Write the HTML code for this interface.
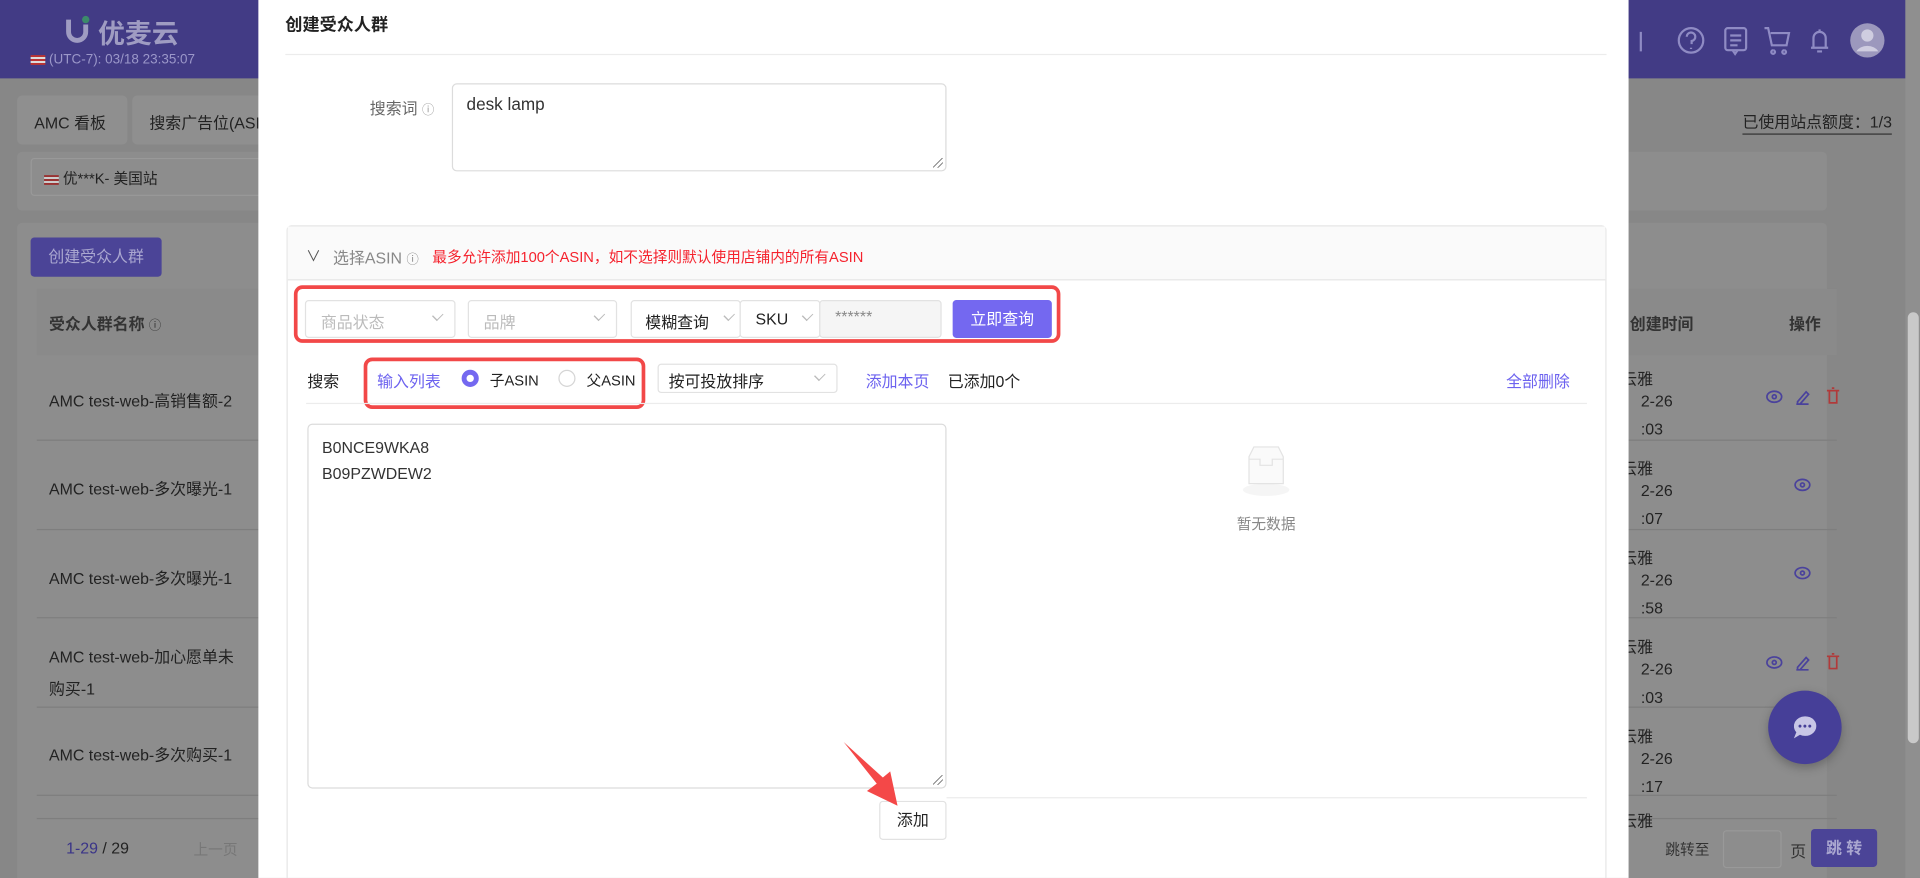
<!DOCTYPE html>
<html><head><meta charset="utf-8"><style>
*{box-sizing:border-box;margin:0;padding:0}
html,body{width:1920px;height:878px;overflow:hidden;background:#878787}
#w{position:absolute;left:0;top:0;width:1568px;height:717px;transform:scale(1.22449);transform-origin:0 0;font-family:"Liberation Sans","Noto Sans CJK SC",sans-serif;font-size:13px;color:#222;background:#878787;overflow:hidden}
.a{position:absolute;white-space:nowrap}
.card{position:absolute;background:#8d8d8d;border-radius:4px}
.sel{position:absolute;border:1px solid #e2e2e2;border-radius:3px;background:#fff;color:#bbb;font-size:13px;padding:7px 12px;height:31px}
.chev{position:absolute;right:10px;top:8px;width:7px;height:7px;border-right:1px solid #bbb;border-bottom:1px solid #bbb;transform:rotate(45deg) scale(.8,1.1)}
.red{position:absolute;border:3px solid #f24848;border-radius:7px}
.pu{color:#6c62ef}
.rz{position:absolute;right:2px;bottom:2px;width:8px;height:8px;background:linear-gradient(135deg,transparent 45%,#888 45% 52%,transparent 52% 70%,#888 70% 77%,transparent 77%)}
.rc{position:absolute;white-space:nowrap;left:1340px;line-height:22.5px}
.rn{position:absolute;white-space:nowrap;left:1324px}
</style></head><body><div id="w">
<div class="a" style="left:0;top:0;width:1568px;height:64px;background:#423b85"></div>
<svg class="a" style="left:52px;top:12px" width="24" height="24"><path d="M4 4v10a7 7 0 0 0 14 0V8" fill="none" stroke="#9f9cc2" stroke-width="4"/><circle cx="18" cy="4" r="3" fill="#3c8a6a"/></svg>
<div class="a" style="left:80px;top:10px;font-size:22px;font-weight:bold;color:#9f9cc2">优麦云</div>
<div class="a" style="left:25px;top:43px;font-size:11px;color:#9b97c9"><span style="display:inline-block;width:12px;height:8px;background:linear-gradient(#b33 0 20%,#ddd 20% 40%,#b33 40% 60%,#ddd 60% 80%,#b33 80%);vertical-align:-1px"></span> (UTC-7): 03/18 23:35:07</div>
<svg class="a" style="left:1335px;top:18px" width="210" height="32" viewBox="0 0 210 32" fill="none" stroke="#8f8bc4" stroke-width="1.8">
<path d="M5 8v16" />
<circle cx="46" cy="15" r="10"/><path d="M42.5 12a3.5 3.5 0 1 1 4 3.5v2.5M46 21v1"/>
<rect x="74" y="5" width="17" height="18" rx="2"/><path d="M78 11h9M78 15h9M78 19h6M80 23l2 3 2-3"/>
<path d="M106 5h3l3 14h12l2-10h-15M113 23a1.5 1.5 0 1 0 .1 0M122 23a1.5 1.5 0 1 0 .1 0"/>
<path d="M144 21h14M146 21v-8a5 5 0 0 1 10 0v8M151 8V6M149 24h4"/>
<circle cx="190" cy="15" r="14" fill="#9c98bd" stroke="none"/><circle cx="190" cy="11" r="5" fill="#cfcde0" stroke="none"/><path d="M181 24a10 8 0 0 1 18 0" fill="#cfcde0" stroke="none"/>
</svg>
<div class="card" style="left:14px;top:78px;width:90px;height:40px;background:#8f8f8f"></div>
<div class="a" style="left:28px;top:90px">AMC 看板</div>
<div class="card" style="left:108px;top:78px;width:150px;height:40px;background:#8f8f8f"></div>
<div class="a" style="left:122px;top:90px">搜索广告位(ASIN)</div>
<div class="a" style="left:1423px;top:89px;border-bottom:1px solid #333;padding-bottom:1px">已使用站点额度：1/3</div>
<div class="card" style="left:14px;top:124px;width:1478px;height:48px"></div>
<div class="a" style="left:25px;top:129px;width:200px;height:31px;border:1px solid #999;border-radius:3px;padding:7px 10px;font-size:12px"><span style="display:inline-block;width:12px;height:8px;background:linear-gradient(#933 0 20%,#ccc 20% 40%,#933 40% 60%,#ccc 60% 80%,#933 80%);vertical-align:-1px"></span> 优***K- 美国站</div>
<div class="card" style="left:14px;top:182px;width:1478px;height:540px"></div>
<div class="a" style="left:25px;top:194px;width:107px;height:32px;background:#4b4497;border-radius:3px;color:#aaa7d0;text-align:center;line-height:32px">创建受众人群</div>
<div class="a" style="left:30px;top:236px;width:1470px;height:54px;background:#8a8a8a"></div>
<div class="a" style="left:40px;top:254px;font-weight:bold;color:#333">受众人群名称 <span style="font-weight:normal;font-size:10px">ⓘ</span></div>
<div class="a" style="left:1331px;top:254px;font-weight:bold;color:#333">创建时间</div>
<div class="a" style="left:1461px;top:254px;font-weight:bold;color:#333">操作</div>
<div class="a" style="left:40px;top:317px">AMC test-web-高销售额-2</div>
<div class="a" style="left:40px;top:389px">AMC test-web-多次曝光-1</div>
<div class="a" style="left:40px;top:462px">AMC test-web-多次曝光-1</div>
<div class="a" style="left:40px;top:524px;line-height:26px">AMC test-web-加心愿单未<br>购买-1</div>
<div class="a" style="left:40px;top:606px">AMC test-web-多次购买-1</div>
<div class="a" style="left:30px;top:359px;width:1470px;height:1px;background:#7e7e7e"></div>
<div class="a" style="left:30px;top:432px;width:1470px;height:1px;background:#7e7e7e"></div>
<div class="a" style="left:30px;top:504px;width:1470px;height:1px;background:#7e7e7e"></div>
<div class="a" style="left:30px;top:577px;width:1470px;height:1px;background:#7e7e7e"></div>
<div class="a" style="left:30px;top:649px;width:1470px;height:1px;background:#7e7e7e"></div>
<div class="a" style="left:30px;top:668px;width:1470px;height:1px;background:#7e7e7e"></div>
<div class="rn" style="top:299px">云雅</div><div class="rc" style="top:317px">2-26<br>:03</div>
<div class="rn" style="top:372px">云雅</div><div class="rc" style="top:390px">2-26<br>:07</div>
<div class="rn" style="top:445px">云雅</div><div class="rc" style="top:463px">2-26<br>:58</div>
<div class="rn" style="top:518px">云雅</div><div class="rc" style="top:536px">2-26<br>:03</div>
<div class="rn" style="top:591px">云雅</div><div class="rc" style="top:609px">2-26<br>:17</div>
<div class="rn" style="top:660px">云雅</div>
<svg class="a" style="left:1440px;top:310px" width="70" height="320" fill="none" stroke-width="1.4">
<g stroke="#4a429c"><ellipse cx="9" cy="14" rx="6" ry="4.5"/><circle cx="9" cy="14" r="1.6"/>
<ellipse cx="32" cy="86" rx="6" ry="4.5"/><circle cx="32" cy="86" r="1.6"/>
<ellipse cx="32" cy="158" rx="6" ry="4.5"/><circle cx="32" cy="158" r="1.6"/>
<ellipse cx="9" cy="231" rx="6" ry="4.5"/><circle cx="9" cy="231" r="1.6"/>
<path d="M28 18l7-8 2 2-7 8h-2zM27 20h10M28 235l7-8 2 2-7 8h-2zM27 237h10"/></g>
<g stroke="#b13a3a"><path d="M52 9h10M54 9v10h6V9M56 7h2M52 226h10M54 226v10h6v-10M56 224h2"/></g>
</svg>
<div class="a" style="left:54px;top:685px;font-size:13px"><span style="color:#3a3488">1-29</span> / 29</div>
<div class="a" style="left:158px;top:685px;color:#777;font-size:12px">上一页</div>
<div class="a" style="left:1360px;top:685px;font-size:12px;color:#333">跳转至</div>
<div class="a" style="left:1407px;top:678px;width:48px;height:31px;border:1px solid #999;border-radius:3px"></div>
<div class="a" style="left:1462px;top:685px;color:#333">页</div>
<div class="a" style="left:1479px;top:677px;width:54px;height:31px;background:#4b4497;border-radius:3px;color:#aaa7d0;text-align:center;line-height:31px;font-weight:bold">跳 转</div>
<div class="a" style="left:1444px;top:564px;width:60px;height:60px;border-radius:50%;background:#463f98;box-shadow:0 3px 8px rgba(0,0,0,.25)"></div>
<svg class="a" style="left:1462px;top:582px" width="24" height="24"><path d="M12 3a9 8 0 1 1-4 15l-5 3 2-5A9 8 0 0 1 12 3z" fill="#c8c6e6"/><circle cx="8" cy="11" r="1.2" fill="#463f98"/><circle cx="12" cy="11" r="1.2" fill="#463f98"/><circle cx="16" cy="11" r="1.2" fill="#463f98"/></svg>
<div class="a" style="left:1556px;top:0;width:12px;height:717px;background:#8f8f8f"></div>
<div class="a" style="left:1558px;top:255px;width:9px;height:352px;background:#c9c9c9;border-radius:5px"></div>
<!-- modal -->
<div class="a" style="left:211px;top:0;width:1119px;height:717px;background:#fff"></div>
<div class="a" style="left:233px;top:10px;font-size:14px;font-weight:bold;color:#222">创建受众人群</div>
<div class="a" style="left:233px;top:44px;width:1079px;height:1px;background:#ececec"></div>
<div class="a" style="left:302px;top:78px;color:#666">搜索词 <span style="font-size:10px;color:#999">ⓘ</span></div>
<div class="a" style="left:369px;top:68px;width:404px;height:72px;border:1px solid #dcdcdc;border-radius:4px;padding:8px 11px;font-size:14px;color:#333">desk lamp<i class="rz"></i></div>
<div class="a" style="left:234px;top:184px;width:1078px;height:540px;border:1px solid #e6e6e6;border-radius:4px"></div>
<div class="a" style="left:235px;top:185px;width:1076px;height:44px;background:#fafafa;border-bottom:1px solid #e6e6e6"></div>
<div class="a" style="left:250px;top:200px;color:#555;font-size:12px">∨</div>
<div class="a" style="left:272px;top:200px;color:#888">选择ASIN <span style="font-size:10px">ⓘ</span></div>
<div class="a" style="left:353px;top:201px;color:#f5222d;font-size:12px">最多允许添加100个ASIN，如不选择则默认使用店铺内的所有ASIN</div>
<div class="sel" style="left:249px;top:245px;width:123px">商品状态<i class="chev"></i></div>
<div class="sel" style="left:382px;top:245px;width:122px">品牌<i class="chev"></i></div>
<div class="sel" style="left:515px;top:245px;width:90px;color:#222;padding-left:11px">模糊查询<i class="chev" style="right:5px"></i></div>
<div class="sel" style="left:604px;top:245px;width:66px;color:#222">SKU<i class="chev" style="right:6px"></i></div>
<div class="sel" style="left:669px;top:245px;width:100px;background:#f5f5f5;color:#888;padding-top:5px">******</div>
<div class="a" style="left:778px;top:245px;width:81px;height:31px;background:#7468f0;border-radius:3px;color:#fff;text-align:center;line-height:31px">立即查询</div>
<div class="red" style="left:240px;top:233px;width:626px;height:47px"></div>
<div class="a" style="left:251px;top:301px">搜索</div>
<div class="a pu" style="left:308px;top:301px">输入列表</div>
<div class="a" style="left:377px;top:302px;width:14px;height:14px;border-radius:50%;border:4px solid #7468f0;background:#fff"></div>
<div class="a" style="left:400px;top:302px;font-size:12px">子ASIN</div>
<div class="a" style="left:456px;top:302px;width:14px;height:14px;border-radius:50%;border:1px solid #d5d5d5"></div>
<div class="a" style="left:479px;top:302px;font-size:12px">父ASIN</div>
<div class="red" style="left:297px;top:292px;width:230px;height:42px"></div>
<div class="sel" style="left:537px;top:297px;width:147px;height:24px;padding:3px 8px;color:#222">按可投放排序<i class="chev" style="top:5px"></i></div>
<div class="a pu" style="left:707px;top:301px">添加本页</div>
<div class="a" style="left:774px;top:301px">已添加0个</div>
<div class="a pu" style="left:1230px;top:301px">全部删除</div>
<div class="a" style="left:250px;top:329px;width:1046px;height:1px;background:#ececec"></div>
<div class="a" style="left:251px;top:346px;width:522px;height:298px;border:1px solid #dcdcdc;border-radius:4px;padding:8px 11px;line-height:21px;color:#333">B0NCE9WKA8<br>B09PZWDEW2<i class="rz"></i></div>
<svg class="a" style="left:1009px;top:362px" width="52" height="48"><ellipse cx="25" cy="38" rx="19" ry="5" fill="#f5f5f5"/><path d="M11 11l4-8h20l4 8v22H11z" fill="#fafafa" stroke="#e3e3e3"/><path d="M11 13h9v5h10v-5h9" fill="none" stroke="#e3e3e3"/></svg>
<div class="a" style="left:1010px;top:419px;color:#888;font-size:12px">暂无数据</div>
<div class="a" style="left:773px;top:651px;width:523px;height:1px;background:#ececec"></div>
<div class="a" style="left:718px;top:654px;width:55px;height:32px;border:1px solid #e2e2e2;border-radius:3px;text-align:center;line-height:30px;color:#222">添加</div>
<svg class="a" style="left:0;top:0" width="1568" height="717"><polygon points="689,606 721,635 727,630 733,658 708,646 716,640" fill="#f44848"/></svg>
</div></body></html>
